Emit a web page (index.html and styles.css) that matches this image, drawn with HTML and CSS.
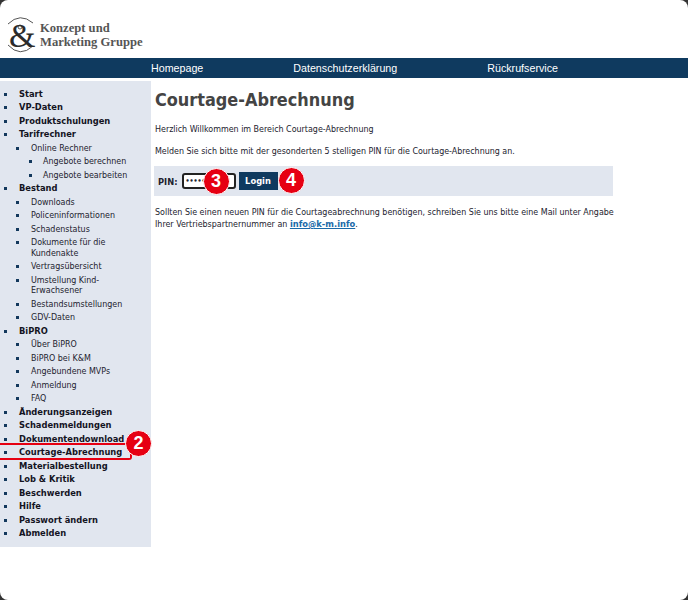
FILE: index.html
```html
<!DOCTYPE html>
<html lang="de">
<head>
<meta charset="utf-8">
<title>Courtage-Abrechnung</title>
<link rel="stylesheet" href="styles.css">
</head>
<body>
<div class="frame"></div>
<header class="logo">
  <svg class="logo-mark" viewBox="0 0 30 36" aria-hidden="true">
    <path class="arc" d="M1 7 Q13 -5 26 6"/>
    <path class="arc" d="M1 28 Q13 41 26 29"/>
    <circle class="arc" cx="13" cy="10" r="2"/>
  </svg>
  <span class="amp">&amp;</span>
  <span class="logo-text">Konzept und<br>Marketing Gruppe</span>
</header>
<nav class="topnav">
  <a>Homepage</a><a>Datenschutzerklärung</a><a>Rückrufservice</a>
</nav>
<div class="main">
  <aside class="side">
    <ul class="l1">
      <li>Start</li>
      <li>VP-Daten</li>
      <li>Produktschulungen</li>
      <li>Tarifrechner
        <ul class="l2"><li>Online Rechner
          <ul class="l3"><li>Angebote berechnen</li><li>Angebote bearbeiten</li></ul>
        </li></ul>
      </li>
      <li>Bestand
        <ul class="l2">
          <li>Downloads</li><li>Policeninformationen</li><li>Schadenstatus</li>
          <li>Dokumente für die<br>Kundenakte</li><li>Vertragsübersicht</li>
          <li>Umstellung Kind-<br>Erwachsener</li><li>Bestandsumstellungen</li><li>GDV-Daten</li>
        </ul>
      </li>
      <li>BiPRO
        <ul class="l2">
          <li>Über BiPRO</li><li>BiPRO bei K&amp;M</li><li>Angebundene MVPs</li><li>Anmeldung</li><li>FAQ</li>
        </ul>
      </li>
      <li>Änderungsanzeigen</li>
      <li>Schadenmeldungen</li>
      <li>Dokumentendownload</li>
      <li class="current">Courtage-Abrechnung<span class="hilite"></span><span class="marker m2">2</span></li>
      <li>Materialbestellung</li>
      <li>Lob &amp; Kritik</li>
      <li>Beschwerden</li>
      <li>Hilfe</li>
      <li>Passwort ändern</li>
      <li>Abmelden</li>
    </ul>
  </aside>
  <main class="content">
    <h1>Courtage-Abrechnung</h1>
    <p>Herzlich Willkommen im Bereich Courtage-Abrechnung</p>
    <p>Melden Sie sich bitte mit der gesonderten 5 stelligen PIN für die Courtage-Abrechnung an.</p>
    <form class="pin">
      <label>PIN:</label>
      <span class="input">•••••<span class="marker m3">3</span></span>
      <span class="btn">Login<span class="marker m4">4</span></span>
    </form>
    <p>Sollten Sie einen neuen PIN für die Courtageabrechnung benötigen, schreiben Sie uns bitte eine Mail unter Angabe<br>Ihrer Vertriebspartnernummer an <a class="mail">info@k-m.info</a>.</p>
  </main>
</div>
</body>
</html>
```
FILE: styles.css
```css
* { box-sizing: border-box; }
html, body { margin: 0; padding: 0; background: #fff; }
body { width: 688px; height: 600px; overflow: hidden; position: relative; font-family: "DejaVu Sans Condensed", "DejaVu Sans", sans-serif; font-stretch: condensed; font-size: 8.85px; color: #22222e; }
.frame { position: absolute; inset: 0; border-radius: 8px; box-shadow: 0 0 0 10px #333; z-index: 5; pointer-events: none; }
.logo { height: 58px; position: relative; }
.logo-mark { position: absolute; left: 7px; top: 17px; width: 30px; height: 36px; }
.arc { fill: none; stroke: #555; stroke-width: 1; }
.amp { position: absolute; left: 9px; top: 20px; font: 34px/32px "Liberation Serif", serif; color: #2b2b2b; }
.logo-text { position: absolute; left: 40px; top: 21px; font: 700 12.6px/14px "Liberation Serif", serif; color: #555; }
.topnav { height: 20px; background: #0f3a5f; display: flex; align-items: center; gap: 90px; font: 10.7px "Liberation Sans", sans-serif; color: #fff; padding-left: 151px; }
.main { display: flex; align-items: flex-start; margin-top: 3px; }
.side { width: 151px; flex: none; background: #e1e6ef; padding: 4.5px 0 8px; }
ul { list-style: none; margin: 0; padding: 0; }
.l1 > li { font-weight: 700; font-size: 9.25px; padding-left: 19px; color: #14141f; }
li { position: relative; padding-top: 3px; line-height: 10.5px; }
.l2 { font-size: 8.85px; }
.l2 li { font-weight: 400; color: #22222e; padding-left: 12px; }
.l1 li::before { content: ""; position: absolute; width: 3px; height: 3px; background: #12385c; left: 4px; top: 7px; }
.l2 > li::before { left: -3px; }
.l3 > li::before { left: -2px; }
.hilite { position: absolute; left: 0; top: -1px; width: 132px; height: 17px; border: 2px solid #e60012; border-left: 0; border-radius: 0 3px 3px 0; }
.marker { position: absolute; width: 27px; height: 27px; border-radius: 50%; background: #e60012; border: 1px solid #fff; color: #fff; font: 700 18px/25px "Liberation Sans", sans-serif; text-align: center; z-index: 2; }
.m2 { left: 125px; top: -14px; }
.m3 { left: 19px; top: -7px; }
.m4 { left: 39px; top: -5px; }
.content { padding-left: 4px; width: 464px; }
h1 { font: 700 17.9px/24px "DejaVu Sans Condensed", "DejaVu Sans", sans-serif; font-stretch: condensed; color: #444; margin: 7px 0 11px; }
p { margin: 0 0 10px; line-height: 12px; }
.pin { background: #e1e6ef; height: 30px; width: 459px; margin: -1px 0 10px -1px; display: flex; align-items: center; padding-left: 4px; gap: 3px; font-weight: 700; font-size: 9.25px; }
.input { position: relative; margin-left: 1px; width: 54px; height: 16px; border: 2px solid #222; border-radius: 3px; background: #fff; font-size: 7px; line-height: 12px; padding-left: 2px; }
.btn { position: relative; background: #0f3a5f; color: #fff; width: 39px; height: 18px; text-align: center; line-height: 18px; }
.mail { color: #1a6aa8; font-weight: 700; font-size: 9.25px; text-decoration: underline; }
```
